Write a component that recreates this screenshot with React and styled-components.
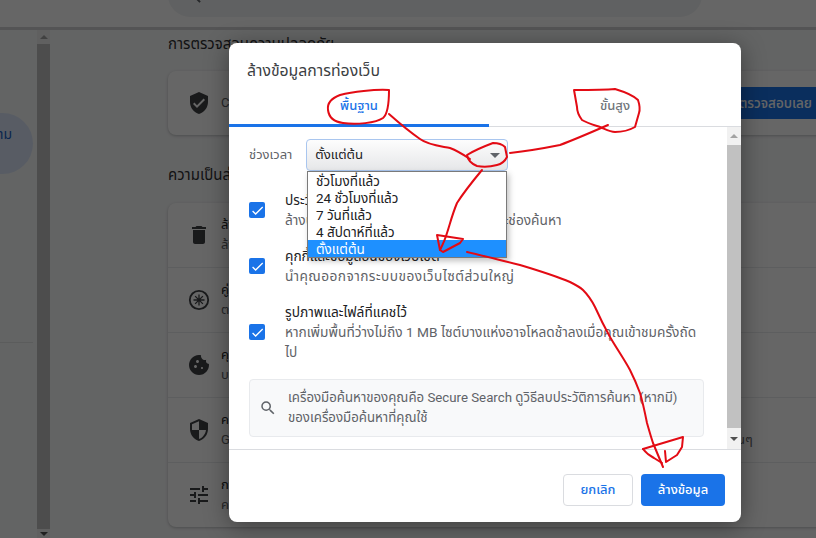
import React from "react";
import styled, { createGlobalStyle } from "styled-components";
import { MdVerifiedUser, MdDelete, MdCookie, MdSecurity, MdTune, MdSearch, MdCheck } from "react-icons/md";

const Global = createGlobalStyle`
  html, body { margin: 0; padding: 0; height: 100%; overflow: hidden; }
  body { font-family: Roboto, "Noto Sans Thai", "Noto Sans", "DejaVu Sans", sans-serif; color: #202124; background: #f8f9fa; }
`;

const Page = styled.div`
  width: 816px;
  height: 538px;
  overflow: hidden;
  position: relative;
  display: flex;
  flex-direction: column;
`;

const Header = styled.header`
  height: 27px;
  flex: none;
  background: #fff;
  border-bottom: 3px solid #d2d3d5;
  padding-left: 168px;
  display: flex;
  align-items: flex-end;
  overflow: hidden;
`;

const SearchBox = styled.div`
  width: 520px;
  height: 44px;
  margin-bottom: 10px;
  flex: none;
  background: #f1f3f4;
  border-radius: 22px;
  display: flex;
  align-items: center;
  gap: 12px;
  padding-left: 14px;
  color: #5f6368;
  font-size: 14px;
`;

const Content = styled.div`
  flex: 1;
  min-height: 0;
  display: flex;
`;

const Sidebar = styled.nav`
  width: 37px;
  flex: none;
  padding-top: 83px;
  overflow: hidden;
`;

const SideItem = styled.div`
  width: 33px;
  height: 61px;
  border-radius: 0 31px 31px 0;
  background: #dbe7f9;
  color: #1a5fc4;
  font-size: 14px;
  line-height: 42px;
  display: flex;
  justify-content: flex-end;
  padding-right: 21px;
  box-sizing: border-box;
  white-space: nowrap;
`;

const SideRule = styled.div`
  width: 33px;
  height: 1px;
  background: #e4e5e6;
  margin-top: 168px;
`;

const Track = styled.div`
  width: ${(p) => p.$w}px;
  flex: none;
  background: #f1f1f1;
  display: flex;
  flex-direction: column;
  height: ${(p) => p.$h}px;
`;

const Arrow = styled.div`
  height: ${(p) => p.$size}px;
  flex: none;
  display: flex;
  align-items: center;
  justify-content: center;
  &::before {
    content: "";
    border-left: 4px solid transparent;
    border-right: 4px solid transparent;
    ${(p) => (p.$down ? "border-top: 4px solid #505050;" : "border-bottom: 4px solid #a3a3a3;")}
  }
`;

const Thumb = styled.div`
  flex: 1;
  background: ${(p) => p.$color};
`;

const Main = styled.main`
  flex: 1;
  min-width: 0;
  padding-left: 118px;
`;

const SectionTitle = styled.h2`
  margin: 0;
  height: ${(p) => p.$h}px;
  font-size: 15px;
  font-weight: 400;
  line-height: 28px;
  color: #2f3033;
  white-space: nowrap;
`;

const Card = styled.section`
  width: 690px;
  background: #fff;
  border-radius: 8px;
  box-shadow: 0 1px 3px rgba(60, 64, 67, 0.3);
  margin-bottom: ${(p) => p.$gap}px;
`;

const CardRow = styled.div`
  height: ${(p) => (p.$first ? 64 : 65)}px;
  display: flex;
  align-items: center;
  padding-left: 18px;
  gap: 9px;
  box-sizing: border-box;
  border-top: ${(p) => (p.$first ? "none" : "1px solid #e8eaed")};
  color: #5f6368;
  font-size: 13px;
  white-space: nowrap;
`;

const RowIcon = styled.span`
  width: 26px;
  flex: none;
  display: flex;
  justify-content: center;
  color: #3f4145;
  font-size: 24px;
`;

const RowText = styled.div`
  flex: 1;
  line-height: 20px;
  strong { display: block; font-weight: 400; color: #202124; }
`;

const CheckNow = styled.span`
  height: 32px;
  margin-right: 30px;
  margin-left: auto;
  padding: 0 16px;
  flex: none;
  background: #1a73e8;
  color: #fff;
  font-size: 13.5px;
  font-weight: 500;
  line-height: 32px;
  text-align: center;
`;

const Scrim = styled.div`
  position: absolute;
  inset: 0;
  background: rgba(0, 0, 0, 0.6);
`;

const Dialog = styled.div`
  position: absolute;
  left: 229px;
  top: 43px;
  width: 512px;
  height: 479px;
  background: #fff;
  border-radius: 8px;
  box-shadow: 0 4px 24px rgba(0, 0, 0, 0.4);
  display: flex;
  flex-direction: column;
`;

const DialogTitle = styled.h1`
  margin: 0;
  height: 42px;
  padding: 17px 18px 0;
  box-sizing: border-box;
  font-size: 15.8px;
  font-weight: 400;
  line-height: 22px;
  color: #3c4043;
`;

const Tabs = styled.div`
  height: 42px;
  flex: none;
  display: flex;
  border-bottom: 1px solid #dadce0;
  box-sizing: border-box;
`;

const Tab = styled.div`
  flex: ${(p) => (p.$active ? "0 0 260px" : "1")};
  text-align: center;
  font-size: 13px;
  font-weight: 500;
  line-height: 28px;
  padding-top: 7px;
  margin-bottom: -1px;
  box-sizing: border-box;
  color: ${(p) => (p.$active ? "#1a73e8" : "#70757a")};
  border-bottom: ${(p) => (p.$active ? "3px solid #1a73e8" : "none")};
`;

const Body = styled.div`
  flex: 1;
  min-height: 0;
  display: flex;
  position: relative;
`;

const Scroller = styled.div`
  flex: 1;
  min-width: 0;
  padding: 12px 23px 0 20px;
`;

const TimeRow = styled.div`
  display: flex;
  align-items: center;
  gap: 11px;
  height: 32px;
  font-size: 13px;
  color: #5f6368;
  margin-bottom: 19px;
  position: relative;
  white-space: nowrap;
`;

const Select = styled.div`
  width: 202px;
  margin-left: 3px;
  height: 32px;
  box-sizing: border-box;
  border: 1px solid #a9c6ef;
  border-radius: 4px;
  background: linear-gradient(#fdfdfd, #e6e7e9);
  color: #202124;
  font-size: 13.2px;
  line-height: 30px;
  padding-left: 8px;
  position: relative;
  &::after {
    content: "";
    position: absolute;
    right: 7px;
    top: 13px;
    border-left: 5px solid transparent;
    border-right: 5px solid transparent;
    border-top: 5px solid #5f6368;
  }
`;

const Menu = styled.ul`
  position: absolute;
  left: 58px;
  top: 32px;
  width: 200px;
  height: 87px;
  margin: 0;
  padding: 0;
  list-style: none;
  background: #fff;
  box-sizing: border-box;
  border: 1px solid #7a7a7a;
  box-shadow: 2px 3px 6px rgba(0, 0, 0, 0.25);
  z-index: 2;
`;

const Option = styled.li`
  height: 17px;
  line-height: 19px;
  padding-left: 8px;
  font-size: 13.5px;
  color: ${(p) => (p.$selected ? "#fff" : "#202124")};
  background: ${(p) => (p.$selected ? "#1e90ff" : "transparent")};
`;

const Item = styled.div`
  display: flex;
  align-items: center;
  gap: 20px;
  margin-bottom: ${(p) => p.$gap}px;
`;

const Check = styled.span`
  width: 16px;
  height: 16px;
  flex: none;
  border-radius: 2px;
  background: #1a73e8;
  color: #fff;
  font-size: 15px;
  display: flex;
  align-items: center;
  justify-content: center;
`;

const ItemText = styled.div`
  font-size: 13.7px;
  line-height: 20px;
  color: #5f6368;
  strong { display: block; font-weight: 400; color: #202124; }
`;

const SpreadLine = styled.span`
  letter-spacing: 0.45px;
`;

const Notice = styled.div`
  margin-top: 17px;
  height: 58px;
  box-sizing: border-box;
  border: 1px solid #e8eaed;
  border-radius: 4px;
  background: #f8f9fa;
  display: flex;
  align-items: center;
  gap: 11px;
  padding: 0 14px 0 9px;
  font-size: 13.25px;
  line-height: 20px;
  color: #5f6368;
  svg { flex: none; font-size: 18px; }
`;

const Footer = styled.div`
  height: 73px;
  flex: none;
  border-top: 1px solid #dadce0;
  box-sizing: border-box;
  display: flex;
  justify-content: flex-end;
  align-items: flex-start;
  gap: 8px;
  padding: 24px 16px 0 0;
`;

const Button = styled.button`
  height: 32px;
  padding: 0;
  width: ${(p) => p.$w}px;
  border-radius: 4px;
  box-sizing: border-box;
  font-family: inherit;
  font-size: 13px;
  font-weight: 500;
  border: ${(p) => (p.$primary ? "none" : "1px solid #dadce0")};
  background: ${(p) => (p.$primary ? "#1a73e8" : "#fff")};
  color: ${(p) => (p.$primary ? "#fff" : "#1a73e8")};
`;

const Ink = styled.svg`
  position: absolute;
  left: 0;
  top: 0;
  z-index: 3;
  width: 816px;
  height: 538px;
  pointer-events: none;
  fill: none;
  stroke: #e30b14;
  stroke-width: 2;
  stroke-linejoin: round;
  stroke-linecap: round;
`;

const InkMarks = () => (
  <Ink viewBox="0 0 816 538">
    <path d="M389 90C375 89 352 92 340 95C332 98 327 103 328 110C329 118 335 122 343 123C356 125 376 123 383 118C388 114 389 100 389 90Z" />
    <path d="M389 114C398 122 410 132 420 139C428 145 440 146 450 148C458 151 464 155 470 159" />
    <path d="M467 155C475 150 485 146 493 143C499 143 503 145 505 147L507 157C505 161 502 164 497 165C490 167 482 167 477 166C472 164 468 161 467 155Z" />
    <path d="M510 153C528 151 545 148 560 145C576 139 592 132 608 125" />
    <path d="M574 90C588 90 604 90 615 89C625 92 634 96 638 100C640 106 640 110 639 113L635 127C628 131 621 132 615 132C610 132 605 129 600 127C594 125 587 123 582 120C579 116 577 111 577 107Z" />
    <path d="M482 170C472 182 464 192 457 203C452 215 450 224 447 233C445 240 442 246 440 250" />
    <path d="M437 235L463 239L460 243L443 252L440 250Z" />
    <path d="M467 252C480 255 500 260 520 265C540 271 556 276 570 282C576 285 580 287 583 290C589 296 592 301 595 307C600 318 605 328 610 337C617 349 624 359 630 370C634 378 637 385 640 393C643 403 645 413 647 423C649 430 651 437 653 443L663 467" />
    <path d="M643 449L683 437L682 447L677 455L666 462L665 451" />
    <path d="M643 449C646 453 650 456 654 458L662 463" />
  </Ink>
);

const Asterisk = () => (
  <svg width="24" height="24" viewBox="0 0 24 24" fill="none" stroke="currentColor">
    <circle cx="12" cy="12" r="9.2" strokeWidth="1.8" />
    <path d="M12 6.5v11M6.5 12h11M8.1 8.1l7.8 7.8M15.9 8.1l-7.8 7.8" strokeWidth="1.3" />
  </svg>
);

export default function App() {
  return (
    <Page>
      <Global />
      <Header>
        <SearchBox>
          <MdSearch size={22} />
          ค้นหาการตั้งค่า
        </SearchBox>
      </Header>
      <Content>
        <Sidebar>
          <SideItem>ความ</SideItem>
          <SideRule />
        </Sidebar>
        <Track $w={13} $h={508}>
          <Arrow $size={14} />
          <Thumb $color="#c1c1c1" />
          <Arrow $size={9} $down />
        </Track>
        <Main>
          <SectionTitle $h={41}>การตรวจสอบความปลอดภัย</SectionTitle>
          <Card $gap={26}>
            <CardRow $first>
              <RowIcon><MdVerifiedUser /></RowIcon>
              <RowText>Chrome ช่วยให้คุณปลอดภัย</RowText>
              <CheckNow>ตรวจสอบเลย</CheckNow>
            </CardRow>
          </Card>
          <SectionTitle $h={42}>ความเป็นส่วนตัวและความปลอดภัย</SectionTitle>
          <Card $gap={0}>
            <CardRow $first>
              <RowIcon><MdDelete /></RowIcon>
              <RowText><strong>ล้างข้อมูลการท่องเว็บ</strong>ล้างประวัติการเข้าชม</RowText>
            </CardRow>
            <CardRow>
              <RowIcon><Asterisk /></RowIcon>
              <RowText><strong>คู่มือความเป็นส่วนตัว</strong>ตรวจสอบการควบคุม</RowText>
            </CardRow>
            <CardRow>
              <RowIcon><MdCookie /></RowIcon>
              <RowText><strong>คุกกี้ของบุคคลที่สาม</strong>บล็อกคุกกี้</RowText>
            </CardRow>
            <CardRow>
              <RowIcon><MdSecurity /></RowIcon>
              <RowText><strong>ความปลอดภัย</strong>Google Safe Browsing (การป้องกันจากเว็บไซต์ที่เป็นอันตราย) และการตั้งค่าความปลอดภัยของเว็บอื่นๆ</RowText>
            </CardRow>
            <CardRow>
              <RowIcon><MdTune /></RowIcon>
              <RowText><strong>การตั้งค่าเว็บไซต์</strong>ควบคุมข้อมูล</RowText>
            </CardRow>
          </Card>
        </Main>
      </Content>
      <Scrim />
      <Dialog>
        <DialogTitle>ล้างข้อมูลการท่องเว็บ</DialogTitle>
        <Tabs>
          <Tab $active>พื้นฐาน</Tab>
          <Tab>ขั้นสูง</Tab>
        </Tabs>
        <Body>
          <Scroller>
            <TimeRow>
              ช่วงเวลา
              <Select>ตั้งแต่ต้น</Select>
              <Menu>
                <Option>ชั่วโมงที่แล้ว</Option>
                <Option>24 ชั่วโมงที่แล้ว</Option>
                <Option>7 วันที่แล้ว</Option>
                <Option>4 สัปดาห์ที่แล้ว</Option>
                <Option $selected>ตั้งแต่ต้น</Option>
              </Menu>
            </TimeRow>
            <Item $gap={16}>
              <Check><MdCheck /></Check>
              <ItemText><strong>ประวัติการเข้าชม</strong>ล้างประวัติจากอุปกรณ์ทั้งหมดที่ซิงค์ไว้และช่องค้นหา</ItemText>
            </Item>
            <Item $gap={16}>
              <Check><MdCheck /></Check>
              <ItemText><strong>คุกกี้และข้อมูลอื่นของเว็บไซต์</strong><SpreadLine>นำคุณออกจากระบบของเว็บไซต์ส่วนใหญ่</SpreadLine></ItemText>
            </Item>
            <Item $gap={0}>
              <Check><MdCheck /></Check>
              <ItemText><strong>รูปภาพและไฟล์ที่แคชไว้</strong>หากเพิ่มพื้นที่ว่างไม่ถึง 1 MB ไซต์บางแห่งอาจโหลดช้าลงเมื่อคุณเข้าชมครั้งถัด<br />ไป</ItemText>
            </Item>
            <Notice>
              <MdSearch />
              <span>เครื่องมือค้นหาของคุณคือ Secure Search ดูวิธีลบประวัติการค้นหา (หากมี) ของเครื่องมือค้นหาที่คุณใช้</span>
            </Notice>
          </Scroller>
          <Track $w={14} $h={322}>
            <Arrow $size={18} />
            <Thumb $color="#c1c1c1" />
            <Arrow $size={21} $down />
          </Track>
        </Body>
        <Footer>
          <Button $w={70}>ยกเลิก</Button>
          <Button $w={84} $primary>ล้างข้อมูล</Button>
        </Footer>
      </Dialog>
      <InkMarks />
    </Page>
  );
}
